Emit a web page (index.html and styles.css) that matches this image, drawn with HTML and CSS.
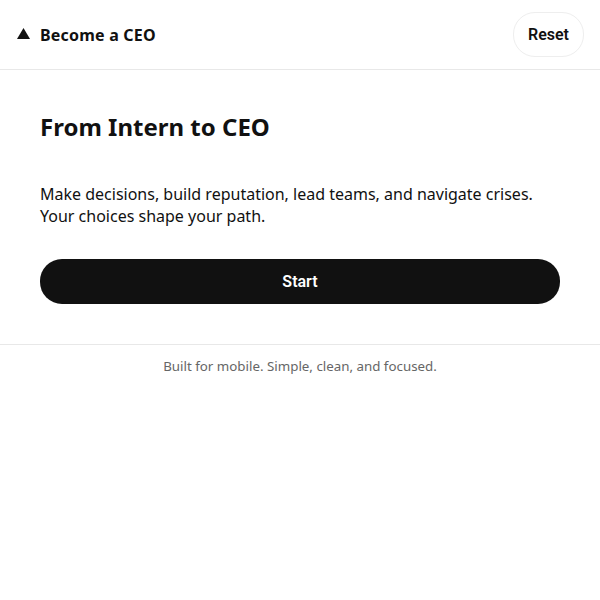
FILE: index.html
```html
<!DOCTYPE html>
<html lang="en">
<head>
<meta charset="utf-8">
<title>Become a CEO</title>
<link rel="stylesheet" href="styles.css">
</head>
<body>
<header class="topbar">
  <div class="brand">
    <svg class="logo" width="13" height="11" viewBox="0 0 13 11"><path d="M6.5 0 L13 11 L0 11 Z" fill="#111"/></svg>
    <span class="brand-name">Become a CEO</span>
  </div>
  <button class="reset">Reset</button>
</header>
<main class="card">
  <h1 class="title">From Intern to CEO</h1>
  <p class="intro">Make decisions, build reputation, lead teams, and navigate crises. Your choices shape your path.</p>
  <button class="start">Start</button>
</main>
<footer class="foot">Built for mobile. Simple, clean, and focused.</footer>
</body>
</html>
```
FILE: styles.css
```css
* { box-sizing: border-box; }
html, body { margin: 0; padding: 0; background: #fff; }
body { font-family: "Noto Sans", sans-serif; color: #111; }
.topbar { height: 70px; display: flex; align-items: center; justify-content: space-between; padding: 0 16px 0 17px; border-bottom: 1px solid #e8e8e8; }
.brand { display: flex; align-items: center; gap: 10px; }
.logo { margin-top: -3px; }
.brand-name { font-size: 16px; font-weight: 700; letter-spacing: 0.2px; }
.reset { width: 71px; height: 45px; border-radius: 22px; border: 1px solid #eee; background: #fff; color: #111; font-family: Roboto, sans-serif; font-size: 16px; font-weight: 600; padding: 0; }
.card { padding: 40px 40px 0; height: 275px; border-bottom: 1px solid #e8e8e8; }
.title { margin: 0 0 39px; font-size: 24px; line-height: 34px; font-weight: 700; }
.intro { margin: 0 0 31px; font-size: 16px; line-height: 22.4px; }
.start { display: block; width: 100%; height: 45px; border: 0; border-radius: 22px; background: #111; color: #fff; font-family: Roboto, sans-serif; font-size: 16px; font-weight: 600; }
.foot { padding-top: 11px; text-align: center; font-size: 13.33px; line-height: 20px; color: #666; }
```
